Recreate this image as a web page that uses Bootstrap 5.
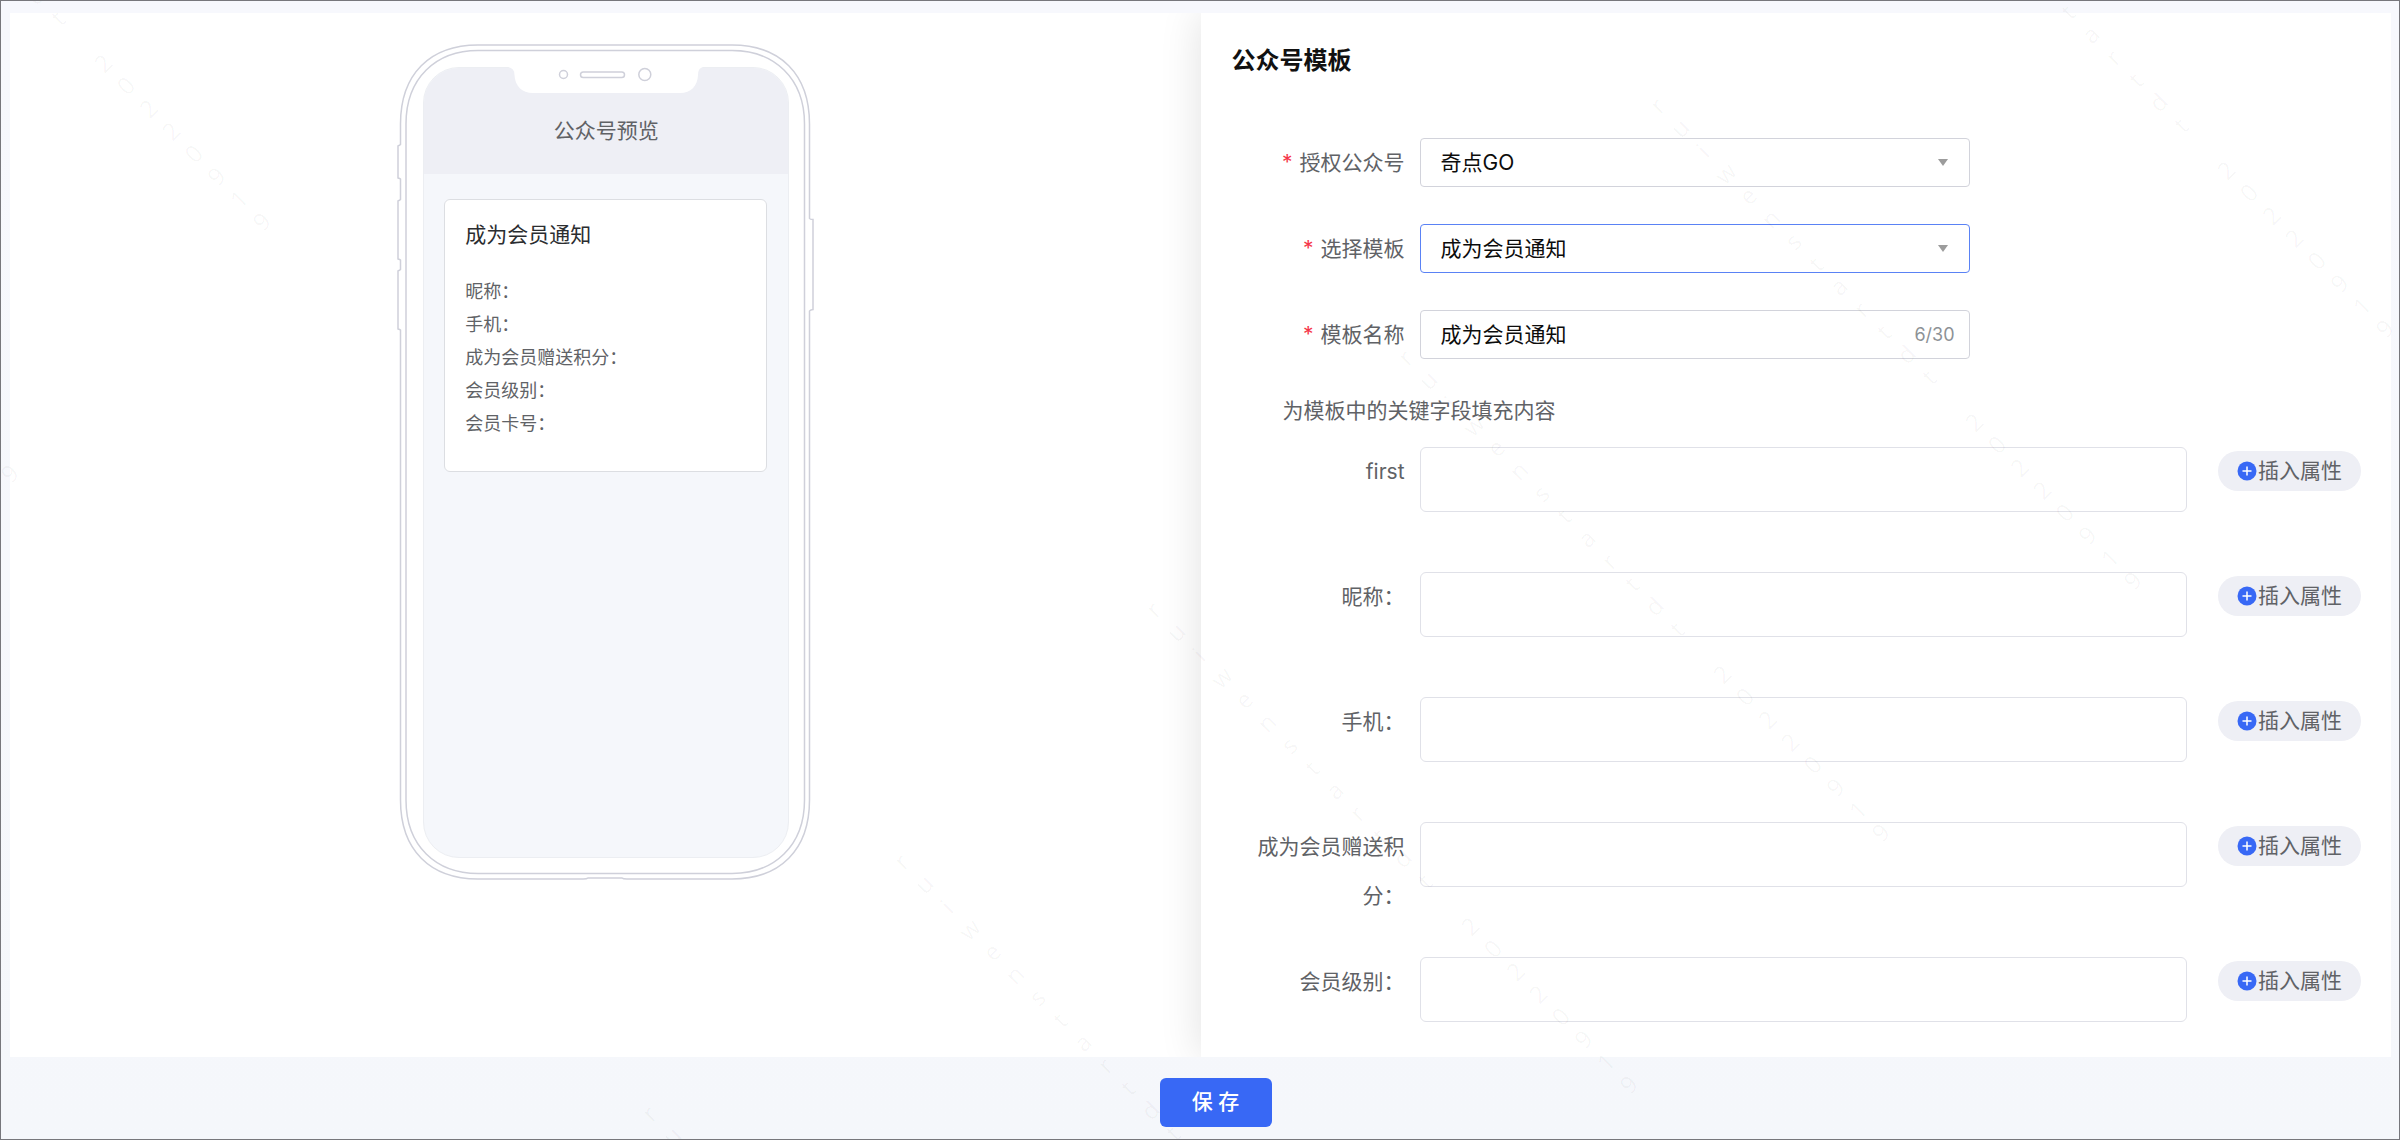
<!DOCTYPE html>
<html lang="zh-CN">
<head>
<meta charset="utf-8">
<meta name="viewport" content="width=device-width, initial-scale=1">
<title>公众号模板</title>
<link href="https://cdn.jsdelivr.net/npm/bootstrap@5.3.0/dist/css/bootstrap.min.css" rel="stylesheet">
<style>
  body {
    font-family: Inter, "Noto Sans CJK SC", sans-serif;
    font-size: 21px;
    line-height: 33px;
    color: #606266;
    background: #f5f7fb;
  }
  .app-shell {
    border: 1px solid #77777c;
    background: linear-gradient(#f7f8fd, #f5f7fb);
  }
  .panels { margin: 12px 8px 0 9px; min-height: 0; }
  .preview-panel { background: #fff; padding-top: 31px; }
  .form-panel {
    background: #fff;
    padding: 31px 30px 0 31px;
    box-shadow: 0 0 40px rgba(0, 0, 0, .12);
  }

  /* phone mock-up */
  .phone { width: 410px; height: 836px; padding: 23px 21px 22px 23px; }
  .phone-frame { top: 0; left: 0; }
  .phone-screen { background: #f5f7fb; border: 1px solid #eceef2; border-radius: 36px; overflow: hidden; }
  .phone-head { height: 106px; padding-top: 18px; background: #eeeff5; }
  .msg-card { margin: 25px 21px 0 20px; padding: 18px 20px 31px; border: 1px solid #dcdee2; border-radius: 6px; background: #fff; }
  .msg-title { color: #2b2d30; margin-bottom: 24px; }
  .msg-list { font-size: 18px; line-height: 33px; }

  /* form */
  .form-title { font-size: 24px; line-height: 33px; font-weight: 700; color: #111; margin-bottom: 61px; }
  .field-label { width: 188px; padding: 0 15px 0 20px; line-height: 49px; text-align: right; flex: none; }
  .req::before { content: "*"; color: #f5364a; margin-right: 7px; }
  .field-row { margin-bottom: 37px; }
  .field-box { max-width: 550px; }
  .form-control, .form-select {
    height: 49px;
    padding: 0 20px;
    font-size: 21px;
    line-height: 33px;
    color: #0c0c0c;
    border: 1px solid #d2d3db;
    border-radius: 4px;
    background-color: transparent;
  }
  input.form-control { padding-bottom: 3px; }
  .form-select {
    background-image: url("data:image/svg+xml,%3Csvg xmlns='http://www.w3.org/2000/svg' viewBox='0 0 10 7'%3E%3Cpath d='M0 0h10L5 7z' fill='%239c9c9c'/%3E%3C/svg%3E");
    background-size: 10px 7px;
    background-position: right 21px center;
  }
  .form-select.is-current { border-color: #5a82f5; }
  .counter { top: 0; right: 15px; font-size: 18px; line-height: 49px; color: #8d9296; }
  .hint { padding-left: 51px; margin: -2px 0 20px; }
  .tpl-row { min-height: 88px; margin-bottom: 37px; }
  textarea.form-control { height: 65px; resize: none; border-color: #e0e1e8; border-radius: 6px; }
  .btn-insert {
    width: 143px;
    height: 40px;
    margin: 4px 0 0 31px;
    padding: 0;
    border: 0;
    border-radius: 20px;
    background: #eeeff5;
    color: #606266;
    font-size: 21px;
    line-height: 40px;
  }
  .save-bar { height: 82px; flex: none; padding: 8px 0 0 31px; }
  .btn-save {
    width: 112px;
    height: 49px;
    padding: 0;
    border: 0;
    border-radius: 6px;
    background: #3868f5;
    color: #fff;
    font-size: 21px;
    font-weight: 500;
    z-index: 3;
  }

  .watermark { font-family: "Open Sans", sans-serif; font-weight: 400; font-size: 24px; fill: #000; fill-opacity: .04; z-index: 2; }
</style>
</head>
<body>
<div class="app-shell position-relative d-flex flex-column vh-100 overflow-hidden">

  <main class="panels row g-0 flex-grow-1 overflow-hidden">
    <section class="preview-panel col-6 h-100" aria-label="公众号预览">
      <div class="phone position-relative mx-auto">
        <div class="phone-screen h-100">
          <div class="phone-head d-flex align-items-center justify-content-center">公众号预览</div>
          <div class="msg-card">
            <div class="msg-title">成为会员通知</div>
            <ul class="msg-list list-unstyled mb-0">
              <li>昵称：</li>
              <li>手机：</li>
              <li>成为会员赠送积分：</li>
              <li>会员级别：</li>
              <li>会员卡号：</li>
            </ul>
          </div>
        </div>
        <svg class="phone-frame position-absolute overflow-visible" width="410" height="836" viewBox="0 0 410 836" fill="none" stroke="#cfd0da" stroke-width="1.5" aria-hidden="true">
          <path d="M78 1H332C380 1 409.500 30 409.500 80V174.500Q410 175.500 413 175.500V265.500Q410 266 409.500 267V756C409.500 806 380 835 332 835H227Q223 835 222 834H188Q187 835 183 835H78C30 835 .5 806 .5 756V286Q0 285.500-2 285V227Q0 226 .5 225.500V216Q0 215.500-2 215V157Q0 156 .5 155.500V135Q0 134.500-2 134V102Q0 101 .5 100.500V80C.5 30 30 1 78 1Z"/>
          <path d="M78 6.500H332C374 6.500 404.500 34 404.500 80V756C404.500 802 374 829.500 332 829.500H78C36 829.500 6 802 6 756V80C6 34 36 6.500 78 6.500Z"/>
          <path d="M108 22V23Q114.500 24 114.500 31C115 42 122 49 133 49H280C291 49 297.500 42 298 31Q298 24 303 23V22Z" fill="#fff" stroke="none"/>
          <circle cx="163.500" cy="30.500" r="4"/>
          <rect x="180.500" y="28" width="44" height="5.500" rx="2.750"/>
          <circle cx="244.800" cy="30.500" r="6"/>
        </svg>
      </div>
    </section>

    <section class="form-panel col-6 h-100">
      <h1 class="form-title">公众号模板</h1>
      <form id="tpl-form">
        <div class="field-row d-flex">
          <label class="field-label req" for="account">授权公众号</label>
          <div class="field-box flex-grow-1">
            <select class="form-select" id="account"><option>奇点GO</option></select>
          </div>
        </div>
        <div class="field-row d-flex">
          <label class="field-label req" for="template">选择模板</label>
          <div class="field-box flex-grow-1">
            <select class="form-select is-current" id="template"><option>成为会员通知</option></select>
          </div>
        </div>
        <div class="field-row d-flex">
          <label class="field-label req" for="tplname">模板名称</label>
          <div class="field-box flex-grow-1 position-relative">
            <input class="form-control" id="tplname" type="text" maxlength="30" value="成为会员通知">
            <span class="counter position-absolute">6/30</span>
          </div>
        </div>

        <p class="hint">为模板中的关键字段填充内容</p>

        <div class="tpl-row d-flex align-items-start">
          <label class="field-label" for="f1">first</label>
          <textarea class="form-control flex-grow-1 w-auto" id="f1"></textarea>
          <button type="button" class="btn btn-insert d-flex align-items-center justify-content-center flex-shrink-0"><svg width="21" height="20" viewBox="0 0 21 20" aria-hidden="true"><circle cx="10" cy="10" r="9.500" fill="#3868f5"/><path d="M10 5.500v9M5.500 10h9" stroke="#fff" stroke-width="1.500"/></svg>插入属性</button>
        </div>
        <div class="tpl-row d-flex align-items-start">
          <label class="field-label" for="f2">昵称：</label>
          <textarea class="form-control flex-grow-1 w-auto" id="f2"></textarea>
          <button type="button" class="btn btn-insert d-flex align-items-center justify-content-center flex-shrink-0"><svg width="21" height="20" viewBox="0 0 21 20" aria-hidden="true"><circle cx="10" cy="10" r="9.500" fill="#3868f5"/><path d="M10 5.500v9M5.500 10h9" stroke="#fff" stroke-width="1.500"/></svg>插入属性</button>
        </div>
        <div class="tpl-row d-flex align-items-start">
          <label class="field-label" for="f3">手机：</label>
          <textarea class="form-control flex-grow-1 w-auto" id="f3"></textarea>
          <button type="button" class="btn btn-insert d-flex align-items-center justify-content-center flex-shrink-0"><svg width="21" height="20" viewBox="0 0 21 20" aria-hidden="true"><circle cx="10" cy="10" r="9.500" fill="#3868f5"/><path d="M10 5.500v9M5.500 10h9" stroke="#fff" stroke-width="1.500"/></svg>插入属性</button>
        </div>
        <div class="tpl-row d-flex align-items-start">
          <label class="field-label" for="f4">成为会员赠送积分：</label>
          <textarea class="form-control flex-grow-1 w-auto" id="f4"></textarea>
          <button type="button" class="btn btn-insert d-flex align-items-center justify-content-center flex-shrink-0"><svg width="21" height="20" viewBox="0 0 21 20" aria-hidden="true"><circle cx="10" cy="10" r="9.500" fill="#3868f5"/><path d="M10 5.500v9M5.500 10h9" stroke="#fff" stroke-width="1.500"/></svg>插入属性</button>
        </div>
        <div class="tpl-row d-flex align-items-start">
          <label class="field-label" for="f5">会员级别：</label>
          <textarea class="form-control flex-grow-1 w-auto" id="f5"></textarea>
          <button type="button" class="btn btn-insert d-flex align-items-center justify-content-center flex-shrink-0"><svg width="21" height="20" viewBox="0 0 21 20" aria-hidden="true"><circle cx="10" cy="10" r="9.500" fill="#3868f5"/><path d="M10 5.500v9M5.500 10h9" stroke="#fff" stroke-width="1.500"/></svg>插入属性</button>
        </div>
      </form>
    </section>
  </main>

  <footer class="save-bar d-flex justify-content-center align-items-center">
    <button type="submit" form="tpl-form" class="btn btn-save position-relative">保 存</button>
  </footer>

  <!-- account watermark, one character per line in slanted columns -->
  <svg class="watermark position-absolute top-0 start-0 w-100 h-100 pe-none" aria-hidden="true">
    <defs>
      <text id="wm" text-anchor="middle" x="0 0 0 0 0 0 0 0 0 0 0 0 0 0 0 0 0 0 0 0 0 0" y="-439 -407 -375 -343 -311 -279 -247 -215 -183 -151 -119 -87 -55 -23 9 41 73 105 137 169 201 233">ruiwenstartdt 20220919</text>
    </defs>
    <use href="#wm" transform="translate(102 62) rotate(-45)"/>
    <use href="#wm" transform="translate(-150 314) rotate(-45)"/>
    <use href="#wm" transform="translate(2225 169) rotate(-45)"/>
    <use href="#wm" transform="translate(1973 421) rotate(-45)"/>
    <use href="#wm" transform="translate(1721 673) rotate(-45)"/>
    <use href="#wm" transform="translate(1469 925) rotate(-45)"/>
    <use href="#wm" transform="translate(1217 1177) rotate(-45)"/>
    <use href="#wm" transform="translate(965 1429) rotate(-45)"/>
  </svg>
</div>
<script src="https://cdn.jsdelivr.net/npm/bootstrap@5.3.0/dist/js/bootstrap.bundle.min.js"></script>
</body>
</html>
